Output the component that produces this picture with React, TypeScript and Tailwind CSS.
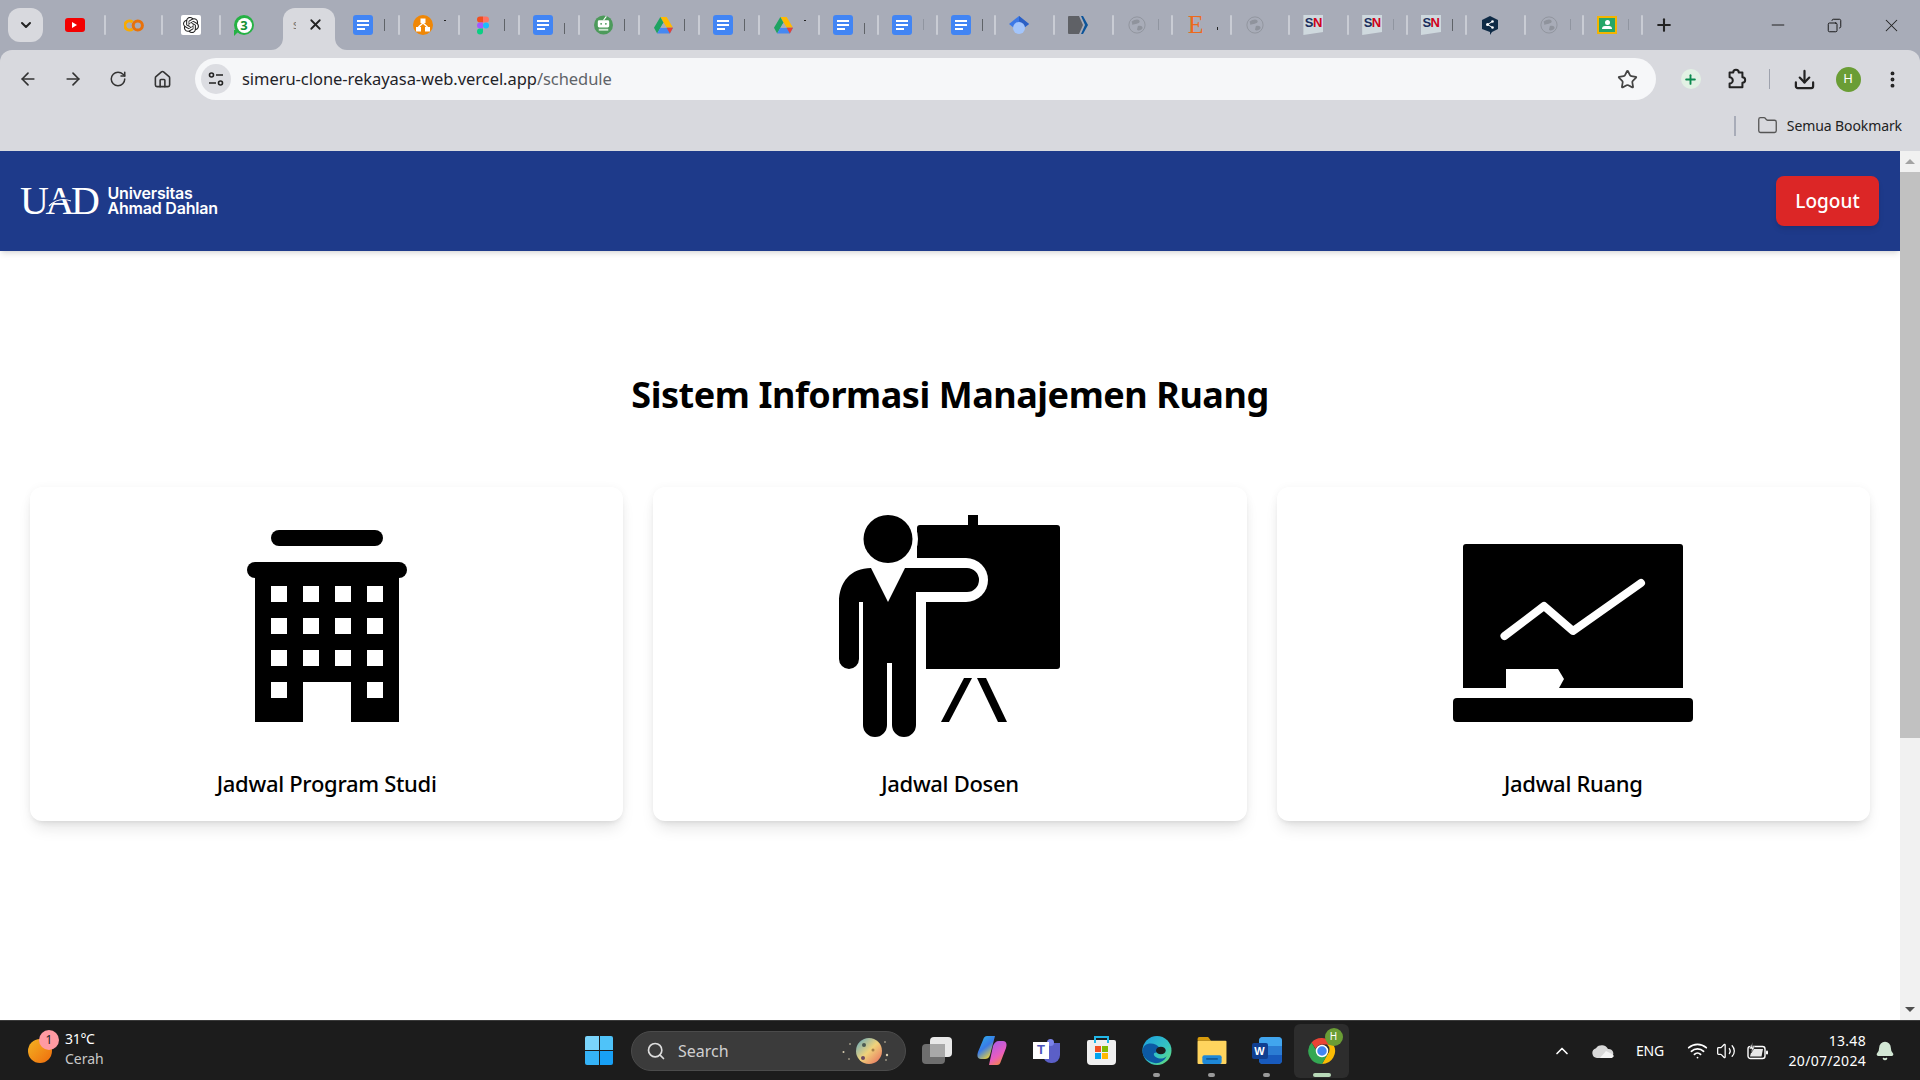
import { ArrowLeft, ArrowRight, Bell, ChevronDown, ChevronUp, Copy, Download, EllipsisVertical, Folder, House, Minus, Plus, RotateCw, Search, Star, Volume2, Wifi, X } from 'lucide-react'
import { SiOpenai } from 'react-icons/si'

function DocsIcon() {
  return (
    <div className="w-5 h-5 rounded-[3px] bg-[#4285f4] flex flex-col justify-center gap-[2px] px-1">
      <div className="h-[2px] w-full bg-white" />
      <div className="h-[2px] w-full bg-white" />
      <div className="h-[2px] w-2/3 bg-white" />
    </div>
  )
}

function YoutubeIcon() {
  return (
    <div className="w-5 h-[14px] rounded-[3px] bg-[#f40000] flex items-center justify-center">
      <div className="w-0 h-0 border-y-[3px] border-y-transparent border-l-[5px] border-l-white" />
    </div>
  )
}

function ColabIcon() {
  return (
    <svg width="20" height="13" viewBox="0 0 20 13" fill="none">
      <path d="M8.500 3A4.600 4.600 0 1 0 8.500 10" stroke="#f9ab00" strokeWidth="3" />
      <circle cx="13.800" cy="6.500" r="4.600" stroke="#e8710a" strokeWidth="3" />
    </svg>
  )
}

function OpenaiIcon() {
  return (
    <div className="w-5 h-5 rounded-[2px] bg-white flex items-center justify-center">
      <SiOpenai size={16} color="#222" />
    </div>
  )
}

function WhatsappIcon() {
  return (
    <div className="relative w-5 h-5 rounded-full bg-[#25b244] flex items-center justify-center">
      <div className="absolute -bottom-[1px] left-0 w-0 h-0 border-t-[6px] border-t-[#25b244] border-r-[6px] border-r-transparent" />
      <div className="relative w-[15px] h-[15px] rounded-full bg-white flex items-center justify-center text-[13px] leading-none font-bold text-[#159034]">3</div>
    </div>
  )
}

function OrgIcon() {
  return (
    <svg width="20" height="20" viewBox="0 0 20 20">
      <circle cx="10" cy="10" r="10" fill="#f08705" />
      <path d="M7.500 3.500h5v4.500h-5zM3 12h5v4.500H3zM12 12h5v4.500h-5z" fill="#fff" />
      <path d="M10 8l-4.500 4M10 8l4.500 4" stroke="#fff" strokeWidth="1.500" />
    </svg>
  )
}

function FigmaIcon() {
  return (
    <svg width="12" height="19" viewBox="0 0 12 18">
      <path d="M6 0H3a3 3 0 0 0 0 6h3z" fill="#f24e1e" />
      <path d="M6 0h3a3 3 0 0 1 0 6H6z" fill="#ff7262" />
      <path d="M6 6H3a3 3 0 0 0 0 6h3z" fill="#a259ff" />
      <circle cx="9" cy="9" r="3" fill="#1abcfe" />
      <path d="M6 12H3a3 3 0 1 0 3 3z" fill="#0acf83" />
    </svg>
  )
}

function BotIcon() {
  return (
    <svg width="19" height="20" viewBox="0 0 20 20">
      <circle cx="10" cy="10" r="10" fill="#4d9a5b" />
      <path d="M10 5l3-4" stroke="#fff" strokeWidth="1.200" />
      <rect x="4" y="5" width="12" height="7.500" rx="1.500" fill="#fff" />
      <circle cx="7.500" cy="8.800" r="1" fill="#4d9a5b" />
      <circle cx="12.500" cy="8.800" r="1" fill="#4d9a5b" />
      <path d="M5 14h10v2H5z" fill="#cfe6d3" />
    </svg>
  )
}

function DriveIcon() {
  return (
    <svg width="19" height="17" viewBox="0 0 20 18" preserveAspectRatio="none">
      <path d="M6.700 0h6.600L20 11.500h-6.700z" fill="#ffba00" />
      <path d="M6.700 0 0 11.500l3.300 6L10 6z" fill="#1ea362" />
      <path d="M6.700 11.500H20l-3.300 6H3.300z" fill="#4688f1" />
      <path d="M20 11.500l-3.300 6-3.400-6z" fill="#e94235" />
      <path d="M10 6l3.300 5.500H6.700z" fill="#a9adb8" />
    </svg>
  )
}

function DiamondIcon() {
  return (
    <svg width="20" height="18" viewBox="0 0 20 18">
      <path d="M10 0l10 8-10 8L0 8z" fill="#3b78e7" />
      <path d="M10 0l10 8-4 3-6-6z" fill="#2b5fc4" />
      <ellipse cx="10" cy="12" rx="6" ry="6" fill="#a3c5fb" />
    </svg>
  )
}

function ArrowTabIcon() {
  return (
    <svg width="20" height="18" viewBox="0 0 20 18">
      <path d="M1 0h10l4 9-4 9H1a1 1 0 0 1-1-1V1a1 1 0 0 1 1-1z" fill="#5f6166" />
      <path d="M13 0h2l5 9-5 9h-2l4-9z" fill="#0c5499" />
    </svg>
  )
}

function GlobeIcon() {
  return (
    <svg width="18" height="18" viewBox="0 0 20 20" fill="none" preserveAspectRatio="none">
      <circle cx="10" cy="10" r="9" stroke="#8f939c" />
      <path d="M4 6c4-3 9-3 9 0s-6 2-8 4zM11 11c4-1 6 1 5 3s-5 3-6 1z" fill="#8f939c" />
    </svg>
  )
}

function EtsyIcon() {
  return <span className="font-['Liberation_Serif',serif] text-[26px] leading-none text-[#ec6a1b]">E</span>
}

function SnIcon() {
  return (
    <div className="w-5 h-5 bg-[#cfd9de] [clip-path:polygon(0_0,100%_0,100%_85%,0_100%)] flex justify-center pt-[1px]">
      <span className="font-['Liberation_Sans',sans-serif] text-[13px] leading-[14px] font-bold tracking-[-0.5px]">
        <span className="text-[#1b2f5e]">S</span>
        <span className="text-[#d0021b]">N</span>
      </span>
    </div>
  )
}

function DeeplIcon() {
  return (
    <svg width="16" height="19" viewBox="0 0 16 19">
      <path d="M8 0l8 4v9l-6 3-2 3v-3L0 13V4z" fill="#0f2b46" />
      <circle cx="5.500" cy="8.500" r="1.500" fill="#fff" />
      <circle cx="10.500" cy="5.500" r="1.300" fill="#fff" />
      <circle cx="10.500" cy="11.500" r="1.300" fill="#fff" />
      <path d="M5.500 8.500l5-3M5.500 8.500l5 3" stroke="#fff" />
    </svg>
  )
}

function ClassroomIcon() {
  return (
    <div className="w-5 h-[18px] bg-[#f4b400] p-[2px]">
      <div className="w-full h-full bg-[#25a667] flex flex-col items-center pt-[2px]">
        <div className="w-[5px] h-[5px] rounded-full bg-white" />
        <div className="w-[10px] h-[3px] mt-[1px] rounded-t-sm bg-white" />
      </div>
    </div>
  )
}

const tabs = [
  { icon: <DocsIcon />, mark: 'bar', width: 'w-[60px]' },
  { icon: <OrgIcon />, mark: 'dot', width: 'w-[60px]' },
  { icon: <FigmaIcon />, mark: 'bar', width: 'w-[60px]' },
  { icon: <DocsIcon />, mark: 'low', width: 'w-[60px]' },
  { icon: <BotIcon />, mark: 'bar', width: 'w-[60px]' },
  { icon: <DriveIcon />, mark: 'bar', width: 'w-[60px]' },
  { icon: <DocsIcon />, mark: 'bar', width: 'w-[60px]' },
  { icon: <DriveIcon />, mark: 'dot', width: 'w-[60px]' },
  { icon: <DocsIcon />, mark: 'low', width: 'w-[58.8px]' },
  { icon: <DocsIcon />, mark: 'faint', width: 'w-[58.8px]' },
  { icon: <DocsIcon />, mark: 'bar', width: 'w-[58.8px]' },
  { icon: <DiamondIcon />, mark: '', width: 'w-[58.8px]' },
  { icon: <ArrowTabIcon />, mark: '', width: 'w-[58.8px]' },
  { icon: <GlobeIcon />, mark: 'faint', width: 'w-[58.8px]' },
  { icon: <EtsyIcon />, mark: 'tiny', width: 'w-[58.8px]' },
  { icon: <GlobeIcon />, mark: '', width: 'w-[58.8px]' },
  { icon: <SnIcon />, mark: '', width: 'w-[58.8px]' },
  { icon: <SnIcon />, mark: 'faint', width: 'w-[58.8px]' },
  { icon: <SnIcon />, mark: 'bar', width: 'w-[58.8px]' },
  { icon: <DeeplIcon />, mark: '', width: 'w-[58.8px]' },
  { icon: <GlobeIcon />, mark: 'faint', width: 'w-[58.8px]' },
  { icon: <ClassroomIcon />, mark: 'faint', width: 'w-[58.8px]' },
]

function TabMark({ kind }: { kind: string }) {
  if (kind === 'bar') return <div className="absolute left-[44px] top-[19px] w-px h-[12px] bg-[#5f6368]" />
  if (kind === 'low') return <div className="absolute left-[44px] top-[23px] w-px h-[11px] bg-[#5f6368]" />
  if (kind === 'faint') return <div className="absolute left-[44px] top-[19px] w-px h-[11px] bg-[#9095a0]" />
  if (kind === 'dot') return <div className="absolute left-[44px] top-[20px] w-[2px] h-px bg-[#222]" />
  if (kind === 'tiny') return <div className="absolute left-[44px] top-[27px] w-px h-[3px] bg-[#222]" />
  return null
}

function Separator() {
  return <div className="w-[2px] h-[20px] rounded-sm bg-[#c9ccd4] shrink-0" />
}

function TabStrip() {
  return (
    <div className="h-[50px] flex items-center bg-[#a8acb8] pl-2">
      <div className="w-[35px] h-[34px] rounded-xl bg-[#d8d9de] flex items-center justify-center shrink-0">
        <ChevronDown size={16} strokeWidth={3} color="#222" />
      </div>
      <div className="ml-[2px] w-[59px] flex items-center justify-center shrink-0"><YoutubeIcon /></div>
      <Separator />
      <div className="w-[55px] flex items-center justify-center shrink-0"><ColabIcon /></div>
      <Separator />
      <div className="w-[56px] flex items-center justify-center shrink-0"><OpenaiIcon /></div>
      <Separator />
      <div className="w-[62px] pl-[13px] flex items-center shrink-0"><WhatsappIcon /></div>
      <div className="relative w-[52px] h-[42px] self-end rounded-t-xl bg-[#d8d9de] flex items-start pt-[8px] shrink-0">
        <svg className="absolute -left-[12px] bottom-0" width="12" height="12" viewBox="0 0 12 12"><path d="M12 0v12H0a12 12 0 0 0 12-12z" fill="#d8d9de" /></svg>
        <svg className="absolute -right-[12px] bottom-0" width="12" height="12" viewBox="0 0 12 12"><path d="M0 0v12h12A12 12 0 0 1 0 0z" fill="#d8d9de" /></svg>
        <span className="ml-[10px] w-[3px] overflow-hidden text-[12px] text-[#777]">s</span>
        <X size={17} strokeWidth={2.5} color="#222" className="ml-[11px]" />
      </div>
      <div className="w-[5px] shrink-0" />
      {tabs.map((tab, index) => (
        <div key={index} className={`relative ${tab.width} h-[50px] flex items-center shrink-0`}>
          <div className="ml-[13px] w-5 flex items-center justify-center">{tab.icon}</div>
          <TabMark kind={tab.mark} />
          <div className="absolute right-0"><Separator /></div>
        </div>
      ))}
      <Plus size={20} strokeWidth={2.5} color="#222" className="ml-[11px]" />
      <div className="ml-auto flex items-center">
        <div className="w-[57px] flex justify-center"><Minus size={20} strokeWidth={1.2} color="#222" /></div>
        <div className="w-[57px] flex justify-center"><Copy size={15} strokeWidth={1.5} color="#111" className="-scale-x-100" /></div>
        <div className="w-[57px] flex justify-center"><X size={21} strokeWidth={1.2} color="#222" /></div>
      </div>
    </div>
  )
}

function Toolbar() {
  const cell = 'w-[45px] h-[42px] flex items-center justify-center shrink-0'
  return (
    <div className="h-[50px] pt-2 pl-[5px] flex items-start bg-[#d8d9de] rounded-t-xl">
      <div className={cell}><ArrowLeft size={20} color="#333" /></div>
      <div className={cell}><ArrowRight size={20} color="#333" /></div>
      <div className={cell}><RotateCw size={18} color="#333" /></div>
      <div className={cell}><House size={19} color="#333" /></div>
      <div className="ml-[10px] w-[1461px] h-[42px] rounded-full bg-[#f6f7f9] flex items-center shrink-0 pl-[6px] pr-[18px]">
        <div className="w-[30px] h-[30px] rounded-full bg-[#dcdde2] flex items-center justify-center">
          <svg width="18" height="18" viewBox="0 0 18 18" fill="none" stroke="#222" strokeWidth="1.600">
            <circle cx="4.500" cy="5" r="2" />
            <path d="M9 5h7M2 13h7" />
            <circle cx="13.500" cy="13" r="2" />
          </svg>
        </div>
        <span className="ml-[11px] pt-[1px] text-[16.5px] text-[#1f2328] tracking-[-0.05px]">
          simeru-clone-rekayasa-web.vercel.app<span className="text-[#5f6368]">/schedule</span>
        </span>
        <Star size={21} strokeWidth={2} color="#444" className="ml-auto" />
      </div>
      <div className="ml-[12px] w-[45px] h-[42px] flex items-center justify-center shrink-0">
        <div className="w-5 h-[20px] rounded-full bg-[#e2f1e4] flex items-center justify-center">
          <Plus size={15} strokeWidth={3} color="#0b8a4e" />
        </div>
      </div>
      <div className={cell}>
        <svg width="24" height="22" viewBox="0 0 24 24" fill="none" stroke="#222" strokeWidth="2.200" strokeLinejoin="round">
          <path d="M5 5H9A3 3 0 0 1 15 5H19V10A3 3 0 0 1 19 16V21H5V17A3 3 0 0 0 5 10Z" />
        </svg>
      </div>
      <div className="ml-[11px] mt-[11px] w-px h-5 bg-[#9ea2ad] shrink-0" />
      <div className="ml-[12px] w-[44px] h-[42px] flex items-center justify-center shrink-0"><Download size={23} strokeWidth={2.3} color="#222" /></div>
      <div className="w-[44px] h-[42px] flex items-center justify-center shrink-0">
        <div className="w-[25px] h-[25px] rounded-full bg-[#6a9d35] flex items-center justify-center text-[13px] text-white">H</div>
      </div>
      <div className="w-[44px] h-[42px] flex items-center justify-center shrink-0"><EllipsisVertical size={21} strokeWidth={2.5} color="#222" /></div>
    </div>
  )
}

function BookmarkBar() {
  return (
    <div className="h-[51px] flex items-center justify-end bg-[#d8d9de] pr-[18px]">
      <div className="w-[2px] h-[20px] bg-[#a8acb8]" />
      <Folder size={21} strokeWidth={1.5} color="#555" className="ml-[21px]" />
      <span className="ml-[9px] text-[14px] text-[#222] tracking-[-0.1px]">Semua Bookmark</span>
    </div>
  )
}

function BuildingIcon() {
  const cols = [73, 105, 137, 169]
  const rows = [88, 120, 152]
  return (
    <svg width="256" height="256" viewBox="0 0 256 256">
      <rect x="73" y="32" width="112" height="16" rx="8" fill="#000" />
      <rect x="49" y="64" width="160" height="16" rx="8" fill="#000" />
      <rect x="57" y="72" width="144" height="152" fill="#000" />
      {rows.map((y) => cols.map((x) => <rect key={`${x}-${y}`} x={x} y={y} width="16" height="16" fill="#fff" />))}
      <rect x="73" y="184" width="16" height="16" fill="#fff" />
      <rect x="169" y="184" width="16" height="16" fill="#fff" />
      <rect x="105" y="184" width="48" height="41" fill="#fff" />
    </svg>
  )
}

function PresenterIcon() {
  return (
    <svg width="256" height="256" viewBox="0 0 256 256">
      <rect x="147" y="17" width="10" height="12" fill="#000" />
      <rect x="96" y="27" width="143" height="144" rx="3" fill="#000" />
      <circle cx="67" cy="41" r="30" fill="#fff" />
      <rect x="60" y="60" width="107" height="44" rx="22" fill="#fff" />
      <rect x="60" y="90" width="45" height="82" fill="#fff" />
      <ellipse cx="67" cy="41" rx="24.500" ry="24" fill="#000" />
      <path d="M50 70C30 70 18 84 18 104V161A10 10 0 0 0 38 161V104H42V227A12 12 0 0 0 66 227V165H71V227A12 12 0 0 0 95 227V94H146A12 12 0 0 0 146 70H84L67 104Z" fill="#000" />
      <path d="M143 180H151L128 224H120Z" fill="#000" />
      <path d="M156 180H165L186 224H177Z" fill="#000" />
    </svg>
  )
}

function BoardIcon() {
  return (
    <svg width="256" height="256" viewBox="0 0 256 256">
      <path d="M22 46H236A3 3 0 0 1 239 49V190H19V49A3 3 0 0 1 22 46Z" fill="#000" />
      <path d="M62 171H114L120 181L115 190H62Z" fill="#fff" />
      <rect x="9" y="200" width="240" height="24" rx="4" fill="#000" />
      <path d="M60.500 138L100 108L129 133L197 85" fill="none" stroke="#fff" strokeWidth="8" strokeLinecap="round" strokeLinejoin="round" />
    </svg>
  )
}

const cards = [
  { label: 'Jadwal Program Studi', icon: <BuildingIcon /> },
  { label: 'Jadwal Dosen', icon: <PresenterIcon /> },
  { label: 'Jadwal Ruang', icon: <BoardIcon /> },
]

function Page() {
  return (
    <div className="flex-1 min-w-0 bg-white overflow-hidden">
      <header className="relative z-10 h-[100px] bg-[#1e3a8a] shadow-md flex items-center justify-between pl-5 pr-[21px]">
        <div className="flex items-center text-white">
          <div className="relative">
            <span className="font-['Liberation_Serif',serif] text-[40px] leading-none tracking-[-3.4px]">UAD</span>
            <svg className="absolute left-[28px] top-[15px]" width="24" height="12" viewBox="0 0 24 12" fill="none">
              <path d="M0 10C6 3 14 1 24 4" stroke="#1e3a8a" strokeWidth="2.400" />
              <path d="M1 10C7 4 15 2 23 5" stroke="#fff" strokeWidth="1.200" />
            </svg>
          </div>
          <div className="ml-[11px] font-['Inter',sans-serif] font-semibold text-[16px] leading-[15px] tracking-[-0.2px]">
            <div>Universitas</div>
            <div>Ahmad Dahlan</div>
          </div>
        </div>
        <button className="w-[103px] h-[50px] pt-[1px] rounded-lg bg-[#dc2626] text-white text-[19px] font-medium shadow-md">Logout</button>
      </header>
      <main className="px-[30px]">
        <h1 className="mt-[124px] mb-[72px] text-center text-[36px] leading-[40px] font-bold tracking-[-0.45px] text-black">Sistem Informasi Manajemen Ruang</h1>
        <div className="grid grid-cols-3 gap-[30px]">
          {cards.map((card) => (
            <div key={card.label} className="h-[334px] rounded-xl bg-white shadow-[0_10px_15px_-3px_rgba(0,0,0,0.1),0_4px_6px_-4px_rgba(0,0,0,0.1),0_0_8px_rgba(0,0,0,0.04)] flex flex-col items-center pt-[11px]">
              <div className="-ml-[2px]">{card.icon}</div>
              <p className="mt-[13px] text-[22px] leading-[32px] font-medium tracking-[-0.3px] text-black">{card.label}</p>
            </div>
          ))}
        </div>
      </main>
    </div>
  )
}

function Scrollbar() {
  return (
    <div className="w-5 bg-[#f1f1f1] flex flex-col items-center shrink-0">
      <div className="h-[21px] flex items-center justify-center">
        <div className="w-0 h-0 border-x-[5px] border-x-transparent border-b-[5px] border-b-[#a3a3a3]" />
      </div>
      <div className="w-full h-[566px] bg-[#c1c1c1]" />
      <div className="mt-auto h-[21px] flex items-center justify-center">
        <div className="w-0 h-0 border-x-[5px] border-x-transparent border-t-[5px] border-t-[#505050]" />
      </div>
    </div>
  )
}

function TaskApp({ children, dot, active }: { children: React.ReactNode; dot?: boolean; active?: boolean }) {
  return (
    <div className={`relative w-[55px] h-[54px] rounded-md flex items-center justify-center shrink-0 ${active ? 'bg-[#2d2d2d]' : ''}`}>
      {children}
      {dot && <div className="absolute bottom-[1px] w-[7px] h-[4px] rounded-full bg-[#9a9a9a]" />}
      {active && <div className="absolute bottom-[1px] w-[18px] h-[4px] rounded-full bg-[#b8d9b8]" />}
    </div>
  )
}

function Taskbar() {
  return (
    <div className="h-[60px] border-t border-[#3a3a3a] bg-[#1c1c1c] flex items-center shrink-0 text-white">
      <div className="w-[585px] pl-[28px] flex items-center shrink-0">
        <div className="relative w-6 h-6 rounded-full bg-gradient-to-br from-[#f2b322] to-[#ee6a0c]">
          <div className="absolute -top-[9px] left-[11px] w-5 h-5 rounded-full bg-[#ff9aa2] flex items-center justify-center text-[12px] text-[#222]">1</div>
        </div>
        <div className="ml-[13px] -mt-[3px] text-[14px] leading-[20px]">
          <div className="tracking-[-0.3px]">31°C</div>
          <div className="text-[#c8c8c8]">Cerah</div>
        </div>
      </div>
      <div className="grid grid-cols-2 gap-[1px] w-[28px] h-[29px] shrink-0">
        <div className="rounded-tl-[2px] bg-[#7ad4fb]" />
        <div className="rounded-tr-[2px] bg-[#4fc3f9]" />
        <div className="rounded-bl-[2px] bg-[#35b3f7]" />
        <div className="rounded-br-[2px] bg-[#18a0f5]" />
      </div>
      <div className="ml-[18px] w-[275px] h-[40px] rounded-full bg-[#3b3b3b] border border-[#4b4b4b] flex items-center pl-[14px] shrink-0">
        <Search size={20} color="#ddd" />
        <span className="ml-[12px] text-[16px] text-[#d0d0d0]">Search</span>
        <svg className="ml-auto mr-[16px]" width="47" height="30" viewBox="0 0 47 30">
          <defs>
            <linearGradient id="moon" x1="0" y1="0" x2="1" y2="1">
              <stop offset="0" stopColor="#5aa7c4" />
              <stop offset="0.5" stopColor="#f0d27a" />
              <stop offset="1" stopColor="#e8695c" />
            </linearGradient>
          </defs>
          <ellipse cx="27" cy="15" rx="13" ry="13" fill="url(#moon)" />
          <circle cx="22" cy="9" r="2" fill="#4b5a52" />
          <circle cx="31" cy="14" r="1.500" fill="#a8824a" />
          <circle cx="21" cy="22" r="2" fill="#6d4a60" />
          <circle cx="1.500" cy="16" r="1" fill="#d8cdb0" />
          <circle cx="8" cy="8" r="0.800" fill="#d8cdb0" />
          <circle cx="7" cy="23" r="0.800" fill="#d8cdb0" />
          <circle cx="43" cy="6" r="0.800" fill="#d8cdb0" />
          <circle cx="45" cy="19" r="1.200" fill="#d8cdb0" />
          <circle cx="44" cy="24" r="0.800" fill="#d8cdb0" />
        </svg>
      </div>
      <div className="ml-[3px] flex items-center">
        <TaskApp>
          <div className="relative w-[30px] h-[27px]">
            <div className="absolute left-0 bottom-0 w-[23px] h-[20px] rounded-sm bg-[#6e6e6e]" />
            <div className="absolute right-0 top-0 w-[22px] h-[20px] rounded-sm bg-[#e8e8e8]" />
            <div className="absolute left-[8px] top-[7px] w-[15px] h-[13px] bg-[#a8a8a8]" />
          </div>
        </TaskApp>
        <TaskApp>
          <svg width="30" height="29" viewBox="0 0 30 29">
            <defs>
              <linearGradient id="copA" x1="0" y1="0" x2="0.6" y2="1">
                <stop offset="0" stopColor="#2bb5e8" />
                <stop offset="0.55" stopColor="#3a7be8" />
                <stop offset="1" stopColor="#e8d23c" />
              </linearGradient>
              <linearGradient id="copB" x1="0.2" y1="0" x2="0.7" y2="1">
                <stop offset="0" stopColor="#a75ce8" />
                <stop offset="0.6" stopColor="#e85cc0" />
                <stop offset="1" stopColor="#f58a3c" />
              </linearGradient>
            </defs>
            <path d="M10 0h8L13 19c-1 3-3 4-5 4H4C0 23 0 19 1 16L6 4c1-3 2-4 4-4z" fill="url(#copA)" />
            <path d="M20 29h-8l4-19c1-3 3-5 6-5h4c4 0 4 4 3 7l-5 13c-1 3-2 4-4 4z" fill="url(#copB)" />
          </svg>
        </TaskApp>
        <TaskApp>
          <div className="relative w-[27px] h-[24px]">
            <div className="absolute right-0 top-[4px] w-[17px] h-[20px] rounded-b-lg bg-[#5b5fc7]" />
            <div className="absolute left-[14px] top-0 w-[7px] h-[7px] rounded-full bg-[#7b83eb]" />
            <div className="absolute left-0 top-[3px] w-[16px] h-[17px] bg-white flex items-center justify-center font-['Liberation_Sans',sans-serif] text-[13px] font-bold text-[#4b53bc]">T</div>
          </div>
        </TaskApp>
        <TaskApp>
          <div className="relative w-[29px] h-[25px] mt-[3px] rounded-b-[4px] rounded-t-[2px] bg-[#efefef] flex items-center justify-center">
            <div className="absolute -top-[4px] left-[7px] w-[15px] h-[7px] border-2 border-b-0 border-[#22b8e8]" />
            <div className="grid grid-cols-2 gap-px w-[13px] h-[13px]">
              <div className="bg-[#f25022]" />
              <div className="bg-[#7fba00]" />
              <div className="bg-[#00a4ef]" />
              <div className="bg-[#ffb900]" />
            </div>
          </div>
        </TaskApp>
        <TaskApp dot>
          <svg width="30" height="29" viewBox="0 0 30 30">
            <defs>
              <linearGradient id="edgeA" x1="0" y1="0" x2="1" y2="1">
                <stop offset="0" stopColor="#1b9de2" />
                <stop offset="0.6" stopColor="#36c6c0" />
                <stop offset="1" stopColor="#6fe06a" />
              </linearGradient>
            </defs>
            <circle cx="15" cy="15" r="15" fill="url(#edgeA)" />
            <path d="M0 16C0 8 8 6 14 9c6 3 4 8 0 8-3 0-3 3 0 5 3 2 8 2 11-1-3 6-10 9-16 6C4 25 0 21 0 16z" fill="#0c59a4" />
            <ellipse cx="19" cy="15" rx="5" ry="4" fill="#1c1c1c" />
          </svg>
        </TaskApp>
        <TaskApp dot>
          <svg width="30" height="27" viewBox="0 0 30 28">
            <path d="M0 2a2 2 0 0 1 2-2h9l3 4H0z" fill="#d89b0c" />
            <rect y="4" width="30" height="24" rx="1" fill="#ffd45e" />
            <rect x="5" y="19" width="20" height="9" rx="2" fill="#1e88d8" />
            <rect x="9" y="22" width="12" height="1.500" fill="#0c4f8c" />
          </svg>
        </TaskApp>
        <TaskApp dot>
          <div className="relative w-[30px] h-[27px]">
            <div className="absolute right-0 top-0 w-[23px] h-[27px] rounded-sm bg-[#2b7cd3]" />
            <div className="absolute right-0 top-0 w-[23px] h-[9px] rounded-t-sm bg-[#41a5ee]" />
            <div className="absolute right-0 bottom-0 w-[23px] h-[9px] rounded-b-sm bg-[#185abd]" />
            <div className="absolute left-0 top-[6px] w-[16px] h-[16px] rounded-[2px] bg-[#103f91] flex items-center justify-center font-['Liberation_Sans',sans-serif] text-[11px] font-bold text-white">W</div>
          </div>
        </TaskApp>
        <TaskApp active>
          <div className="relative">
            <svg width="28" height="28" viewBox="0 0 28 28">
              <path d="M14 1a13 13 0 0 1 11.300 6.500H14a6.500 6.500 0 0 0-6.200 4.500L3.500 5.500A13 13 0 0 1 14 1z" fill="#ea4335" />
              <path d="M25.300 7.500A13 13 0 0 1 14 27l5.600-9.800A6.500 6.500 0 0 0 19 7.500z" fill="#fbbc04" />
              <path d="M3.500 5.500L9 14.500a6.500 6.500 0 0 0 10.600 2.700L14 27A13 13 0 0 1 3.500 5.500z" fill="#34a853" />
              <circle cx="14" cy="14" r="5.500" fill="#4285f4" stroke="#fff" strokeWidth="1.500" />
            </svg>
            <div className="absolute -top-[9px] -right-[7px] w-[18px] h-[18px] rounded-full bg-[#6a9d35] flex items-center justify-center text-[10px] text-white">H</div>
          </div>
        </TaskApp>
      </div>
      <div className="ml-auto pr-[25px] flex items-center">
        <ChevronUp size={20} strokeWidth={2} color="#fff" />
        <svg className="ml-[20px]" width="22" height="14" viewBox="0 0 22 14">
          <path d="M5 14a5 5 0 0 1-1-9.800A7 7 0 0 1 16 5a4.500 4.500 0 0 1 1.500 9z" fill="#d8d8d8" />
          <path d="M8 14l6-7 6 3 2 2-2 2z" fill="#f4f4f4" />
        </svg>
        <span className="ml-[21px] w-[30px] text-[14px] text-center tracking-[-0.2px]">ENG</span>
        <Wifi size={21} strokeWidth={2} color="#fff" className="ml-[22px]" />
        <Volume2 size={20} strokeWidth={1.5} color="#fff" className="ml-[8px]" />
        <svg className="ml-[11px]" width="22" height="18" viewBox="0 0 22 18" fill="none">
          <rect x="1" y="4.500" width="17" height="12" rx="2.500" stroke="#fff" strokeWidth="1.400" />
          <path d="M3 14.500L5 7h11l-1.500 7.500z" fill="#e8e8e8" />
          <rect x="19" y="8.500" width="2" height="4" rx="1" fill="#fff" />
          <path d="M6 0L2 7h3L4 11l4-6H5z" fill="#fff" stroke="#1c1c1c" strokeWidth="0.600" />
        </svg>
        <div className="w-[97px] text-right text-[14px] leading-[20px] tracking-[0.3px]">
          <div>13.48</div>
          <div>20/07/2024</div>
        </div>
        <Bell size={20} fill="#d3e8d5" color="#d3e8d5" className="ml-[9px]" />
      </div>
    </div>
  )
}

export default function App() {
  return (
    <div className="w-screen h-screen flex flex-col overflow-hidden bg-[#a8acb8] font-['Noto_Sans','Open_Sans',sans-serif]">
      <TabStrip />
      <Toolbar />
      <BookmarkBar />
      <div className="flex-1 min-h-0 flex">
        <Page />
        <Scrollbar />
      </div>
      <Taskbar />
    </div>
  )
}
